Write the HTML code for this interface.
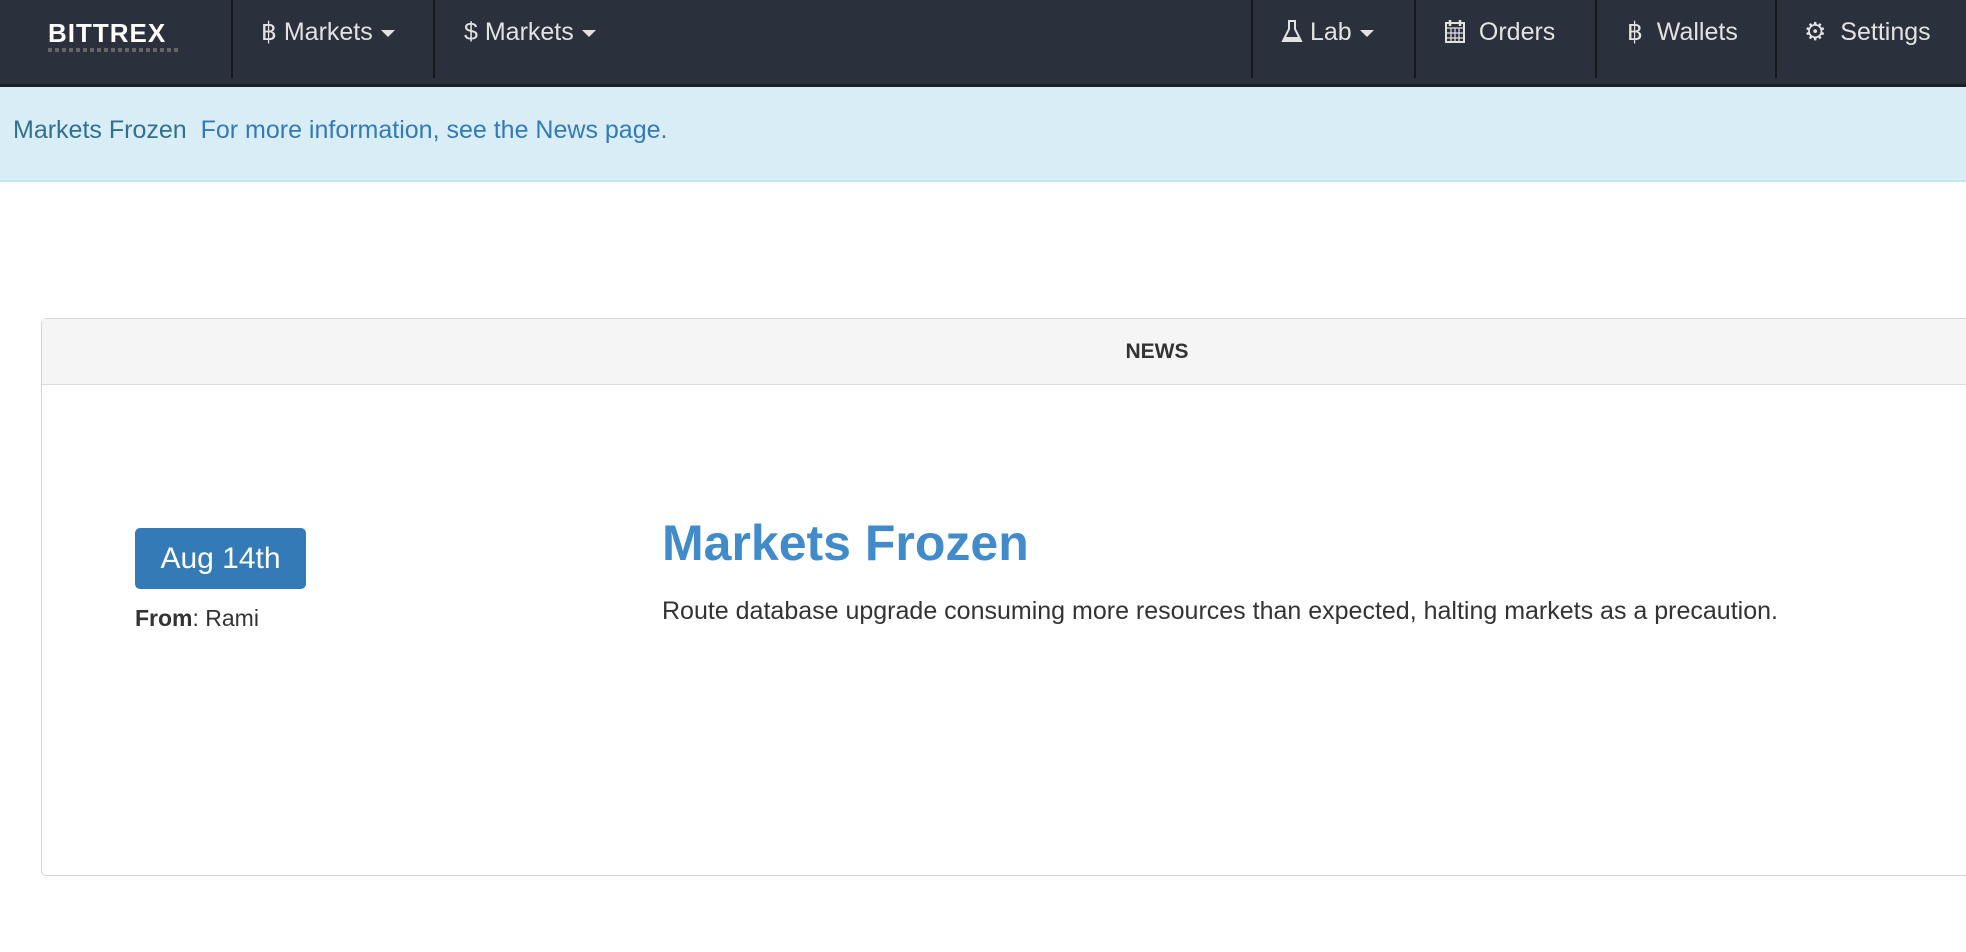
<!DOCTYPE html>
<html><head><meta charset="utf-8"><style>
*{margin:0;padding:0;box-sizing:border-box}
body{width:1966px;height:952px;background:#fff;font-family:"Liberation Sans",Arial,sans-serif;overflow:hidden;position:relative}
.nav{position:absolute;left:0;top:0;width:1966px;height:87px;background:#2a313c;border-bottom:3px solid #1b1f25}
.div{position:absolute;top:0;width:2px;height:78px;background:#15181d}
.t{position:absolute;top:16px;color:#e2e2e2;font-size:25px;line-height:32px;white-space:nowrap}
.car{display:inline-block;width:0;height:0;border-left:7px solid transparent;border-right:7px solid transparent;border-top:7px solid #e2e2e2;vertical-align:middle;margin-left:8px}
.banner{position:absolute;left:0;top:87px;width:1966px;height:95px;background:#d9edf7;border-bottom:2px solid #bce8f1}
.panel{position:absolute;left:41px;top:318px;width:2240px;height:558px;border:1px solid #d6d6d6;border-radius:5px;background:#fff}
.ph{height:66px;background:#f5f5f5;border-bottom:1px solid #ddd;text-align:center;line-height:66px;font-weight:bold;font-size:21px;color:#333;padding-right:8px}
</style></head><body>
<div class="nav">
 <div class="t" style="left:48px;font-weight:bold;font-size:26px;color:#fff;letter-spacing:1px;top:17px">BITTREX</div>
 <div style="position:absolute;left:48px;top:48px;width:132px;height:4px;background:repeating-linear-gradient(90deg,#666 0 4px,transparent 4px 7px)"></div>
 <div class="div" style="left:231px"></div>
 <div class="div" style="left:433px"></div>
 <div class="div" style="left:1251px"></div>
 <div class="div" style="left:1414px"></div>
 <div class="div" style="left:1595px"></div>
 <div class="div" style="left:1775px"></div>
 <div class="t" style="left:261px">฿ Markets<span class="car"></span></div>
 <div class="t" style="left:464px">$ Markets<span class="car"></span></div>
 <div class="t" style="left:1281px"><svg width="22" height="24" viewBox="0 0 22 24" style="vertical-align:-3px"><path d="M7 2h8M8 2v8L2 22h18L14 10V2" fill="none" stroke="#e2e2e2" stroke-width="2"/><path d="M4 18h14l2 4H2z" fill="#e2e2e2"/></svg> Lab<span class="car"></span></div>
 <div class="t" style="left:1445px"><svg width="20" height="24" viewBox="0 0 20 24" style="vertical-align:-3px"><rect x="1" y="4" width="18" height="19" fill="none" stroke="#e2e2e2" stroke-width="2"/><path d="M1 9h18M1 14h18M1 19h18M6 9v14M10 9v14M14 9v14" stroke="#e2e2e2" stroke-width="1.2"/><path d="M5 1v6M15 1v6" stroke="#e2e2e2" stroke-width="2.5"/></svg>&nbsp; Orders</div>
 <div class="t" style="left:1627px">฿&nbsp;&nbsp;Wallets</div>
 <div class="t" style="left:1804px">⚙&nbsp; Settings</div>
</div>
<div class="banner"><div style="position:absolute;left:13px;top:29px;font-size:25px;color:#31708f">Markets Frozen&nbsp; <span style="color:#337ab7">For more information, see the News page.</span></div></div>
<div class="panel"><div class="ph">NEWS</div></div>
<div style="position:absolute;left:135px;top:528px;width:171px;height:61px;background:#337ab7;border-radius:5px;color:#fff;font-size:30px;text-align:center;line-height:61px">Aug 14th</div>
<div style="position:absolute;left:135px;top:605px;font-size:23px;color:#333"><b>From</b>: Rami</div>
<div style="position:absolute;left:662px;top:514px;font-size:50px;font-weight:bold;color:#428bca">Markets Frozen</div>
<div style="position:absolute;left:662px;top:597px;font-size:25px;color:#333;white-space:nowrap">Route database upgrade consuming more resources than expected, halting markets as a precaution.</div>
</body></html>
